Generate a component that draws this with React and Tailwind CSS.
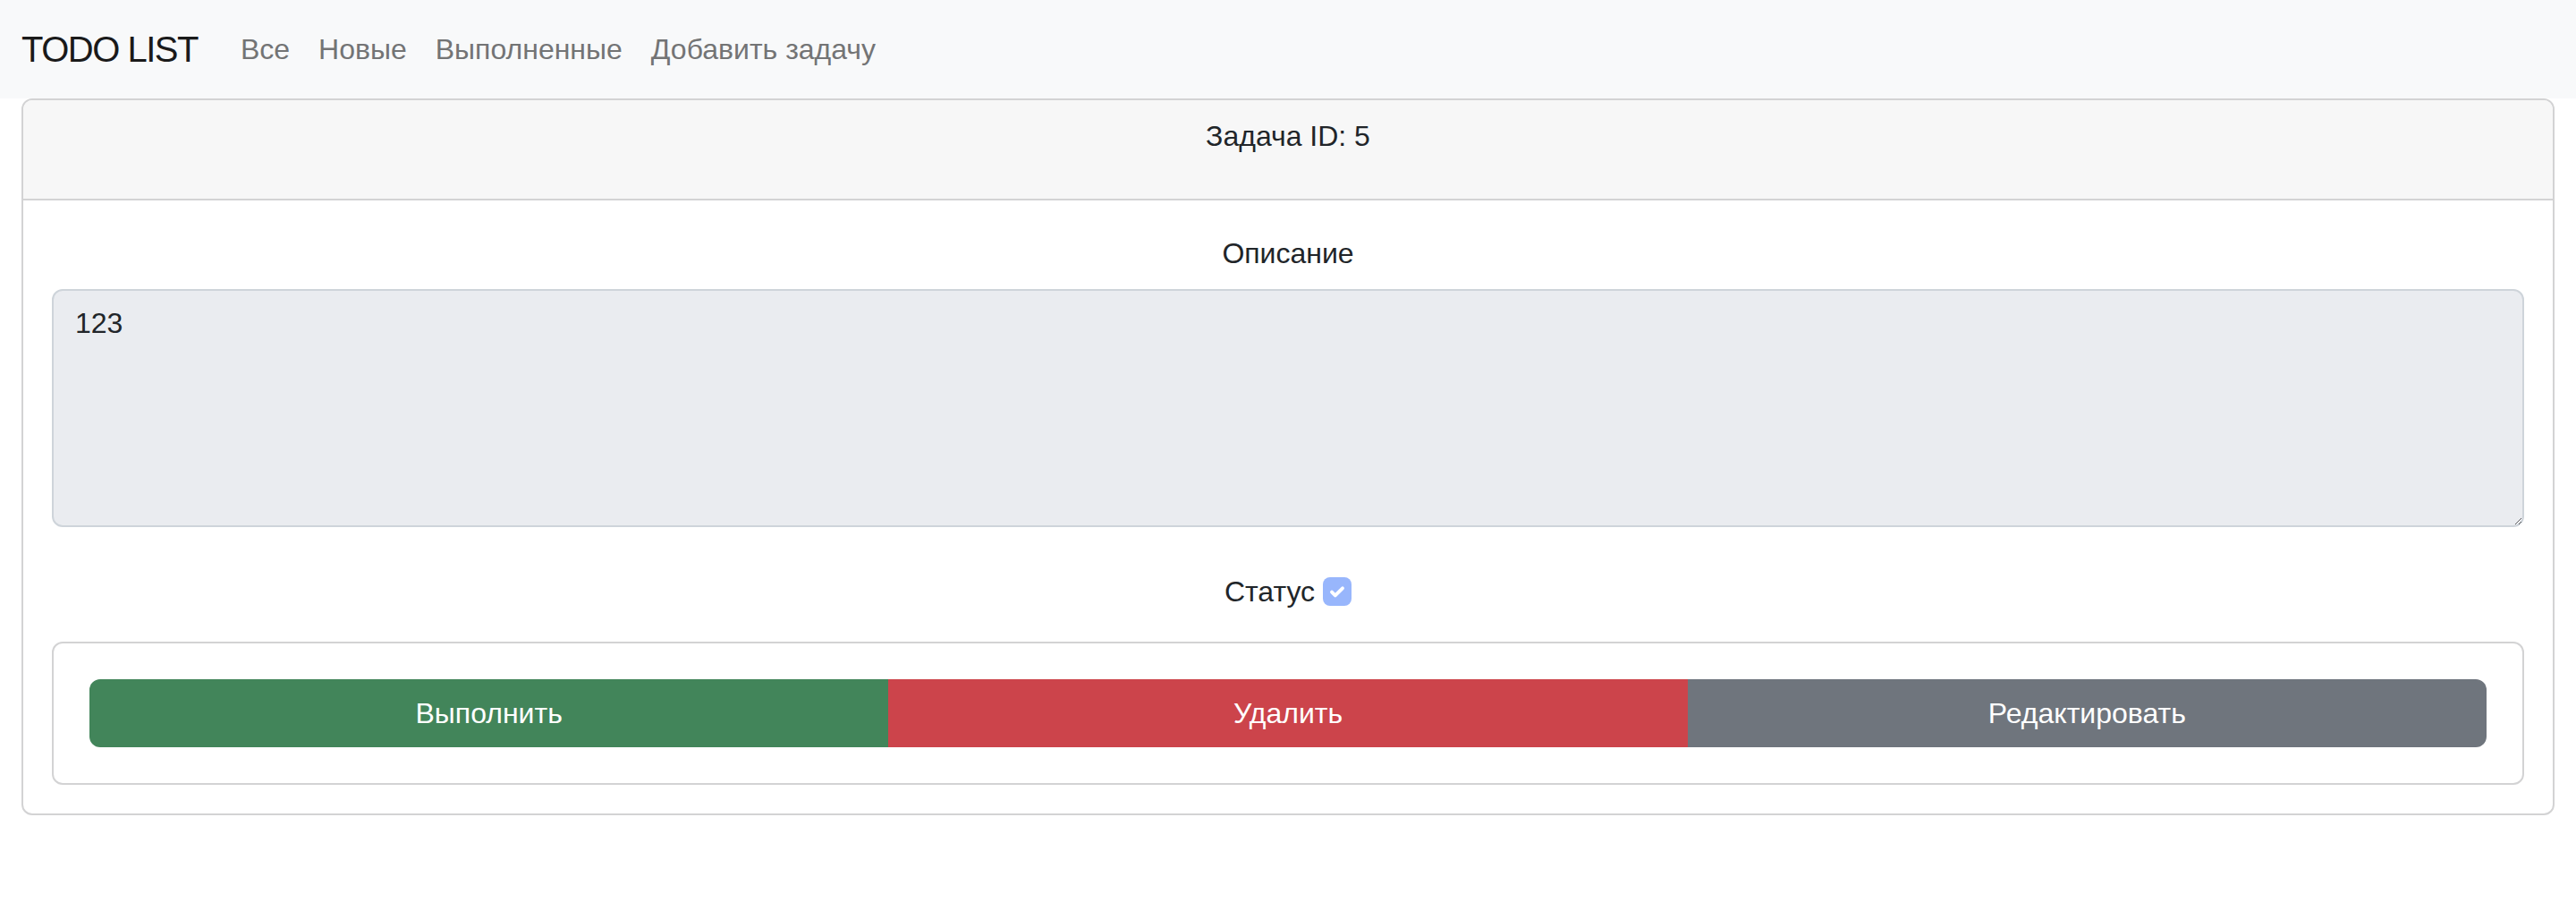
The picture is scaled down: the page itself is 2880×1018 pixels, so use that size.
import React from "react";

// --- NAV LINKS ---
const links = ["Все", "Новые", "Выполненные", "Добавить задачу"];

function Navbar() {
  return (
    <nav className="h-[110px] bg-[#f8f9fa] flex items-center px-[24px]">
      <a className="text-[40px] leading-[60px] tracking-[-1.5px] text-[#1a1a1a] mr-[32px]">TODO LIST</a>
      <ul className="flex">
        {links.map((l) => (
          <li key={l}>
            <a className="block px-[16px] text-[32px] leading-[48px] text-[#737475]">{l}</a>
          </li>
        ))}
      </ul>
    </nav>
  );
}

function StatusCheck() {
  return (
    <span className="ml-[9px] w-[32px] h-[32px] rounded-[8px] bg-[#98b6fc] flex items-center justify-center">
      <svg width="24" height="24" viewBox="0 0 20 20" fill="none">
        <path d="M5 10.5l3.2 3.2L15 7" stroke="#fff" strokeWidth="3.2" strokeLinecap="round" strokeLinejoin="round" />
      </svg>
    </span>
  );
}

export default function App() {
  return (
    <div
      className="min-h-screen bg-white text-[#212529]"
      style={{ fontFamily: "'Liberation Sans', Arial, sans-serif" }}
    >
      <Navbar />

      {/* ── TASK CARD ── */}
      <div className="px-[24px]">
        <div className="border-2 border-[#d3d3d4] rounded-[12px] overflow-hidden">
          <div className="bg-[#f7f7f7] border-b-2 border-[#d3d3d4] pt-[16px] pb-[46px] text-center text-[32px] leading-[48px]">
            Задача ID: 5
          </div>

          <div className="pt-[35px] px-[32px] pb-[32px] text-center">
            <div className="text-[32px] leading-[48px] mb-[16px]">Описание</div>
            <textarea
              disabled
              value="123"
              readOnly
              className="block w-full h-[266px] bg-[#eaecf0] border-2 border-[#ced4da] rounded-[12px] px-[24px] py-[12px] text-[32px] leading-[48px] text-[#212529] text-left"
            />

            <div className="mt-[48px] h-[48px] flex items-center justify-center text-[32px]">
              Статус
              <StatusCheck />
            </div>

            <div className="mt-[32px] border-2 border-[#d3d3d4] rounded-[12px] p-[40px]">
              <div className="flex h-[76px] text-white text-[32px]">
                <button className="flex-1 bg-[#42855a] rounded-l-[12px]">Выполнить</button>
                <button className="flex-1 bg-[#cc444b]">Удалить</button>
                <button className="flex-1 bg-[#6f757d] rounded-r-[12px]">Редактировать</button>
              </div>
            </div>
          </div>
        </div>
      </div>
    </div>
  );
}
